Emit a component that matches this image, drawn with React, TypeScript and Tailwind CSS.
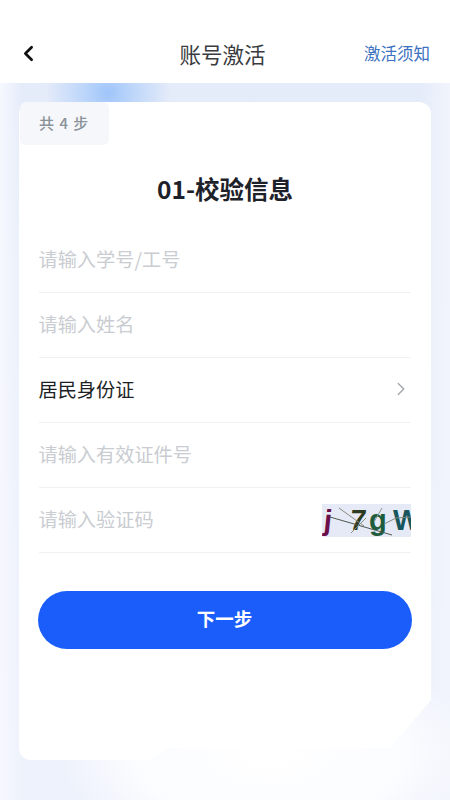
import { ChevronLeft, ChevronRight } from 'lucide-react';

const fields = ['请输入学号/工号', '请输入姓名'];

function Row({ children }: { children: React.ReactNode }) {
  return <div className="flex h-[65px] items-center justify-between border-b border-[#f0f1f3] pb-[2px] text-[19.2px]">{children}</div>;
}

function Captcha() {
  return (
    <div className="relative mt-[2px] flex h-[33px] w-[89px] shrink-0 items-center overflow-hidden bg-[#e6e9f6] font-['Liberation_Sans',sans-serif] text-[29px] leading-none font-bold whitespace-nowrap">
      <span className="ml-[2px] w-[26px] shrink-0 -skew-x-6 text-[#6b0f4a]">j</span>
      <span className="w-[19px] shrink-0 -skew-x-6 text-[#2c3a20]">7</span>
      <span className="w-[24px] shrink-0 text-[#1d5c3c]">g</span>
      <span className="shrink-0 text-[#17565c]">W</span>
      <svg className="absolute inset-0" width="89" height="33" viewBox="0 0 89 33" fill="none" strokeWidth="1">
        <path d="M8 13 L70 31" stroke="#4a5a50" />
        <path d="M17 4 L42 22" stroke="#8a8a80" />
        <path d="M29 29 L44 14" stroke="#8a8f80" />
        <path d="M62 20 L74 14 L89 13" stroke="#7a8a80" />
        <path d="M60 4 L52 18" stroke="#8a9a90" />
      </svg>
    </div>
  );
}

export default function App() {
  return (
    <div className="flex h-[800px] w-[450px] flex-col overflow-hidden bg-white font-['Noto_Sans_CJK_SC','Noto_Sans',sans-serif]">
      <header className="flex h-[83px] shrink-0 items-end bg-white pb-[16px]">
        <div className="relative flex h-[27px] w-full items-center justify-between pr-[20px] pl-[16px]">
          <ChevronLeft className="h-[25px] w-[25px] text-[#111]" strokeWidth={2.6} />
          <h1 className="ml-[40px] text-[21.5px] leading-none font-normal text-[#3a3c40]">账号激活</h1>
          <button type="button" className="text-[16.5px] leading-none text-[#3b71c0]">
            激活须知
          </button>
        </div>
      </header>

      <main className="relative flex-1 bg-[radial-gradient(ellipse_62px_60px_at_108px_10px,#9fc5fb_0%,#bdd6fa_40%,transparent_100%),radial-gradient(ellipse_210px_110px_at_270px_670px,#ffffff_0%,#fbfcff_65%,transparent_100%),linear-gradient(90deg,#f6f8fe_0%,transparent_5%,transparent_93%,#f1f4fc_100%),linear-gradient(180deg,#e4ebf9_0%,#e9effa_25%,#eef2fc_100%)] px-[19px] pt-[19px]">
        <div className="h-[658px] w-[412px] rounded-[12px] bg-white [clip-path:polygon(0_0,100%_0,100%_598px,371px_646px,150px_646px,130px_658px,0_658px)]">
          <div className="ml-[1px] flex h-[43px] w-[89px] items-center rounded-[6px] bg-[#f5f7fa] pl-[19px] text-[15px] font-medium tracking-[1px] text-[#8a9199]">
            共 4 步
          </div>
          <h2 className="mt-[27px] text-center text-[24.5px] leading-[34px] font-bold text-[#1d2129]">01-校验信息</h2>
          <form className="mt-[22px] pr-[20px] pl-[19.5px]">
            {fields.map((field) => (
              <Row key={field}>
                <span className="text-[#c9ccd1]">{field}</span>
              </Row>
            ))}
            <Row>
              <span className="text-[#1c1f23]">居民身份证</span>
              <ChevronRight className="mr-[-1px] h-[22px] w-[22px] text-[#a3a7ad]" strokeWidth={1.5} />
            </Row>
            <Row>
              <span className="text-[#c9ccd1]">请输入有效证件号</span>
            </Row>
            <Row>
              <span className="text-[#c9ccd1]">请输入验证码</span>
              <Captcha />
            </Row>
            <button type="button" className="mt-[38px] -ml-[1px] h-[58px] w-[374px] rounded-full bg-[#1a5dfb] pb-[3px] text-[18.5px] font-bold text-white">
              下一步
            </button>
          </form>
        </div>
      </main>
    </div>
  );
}
